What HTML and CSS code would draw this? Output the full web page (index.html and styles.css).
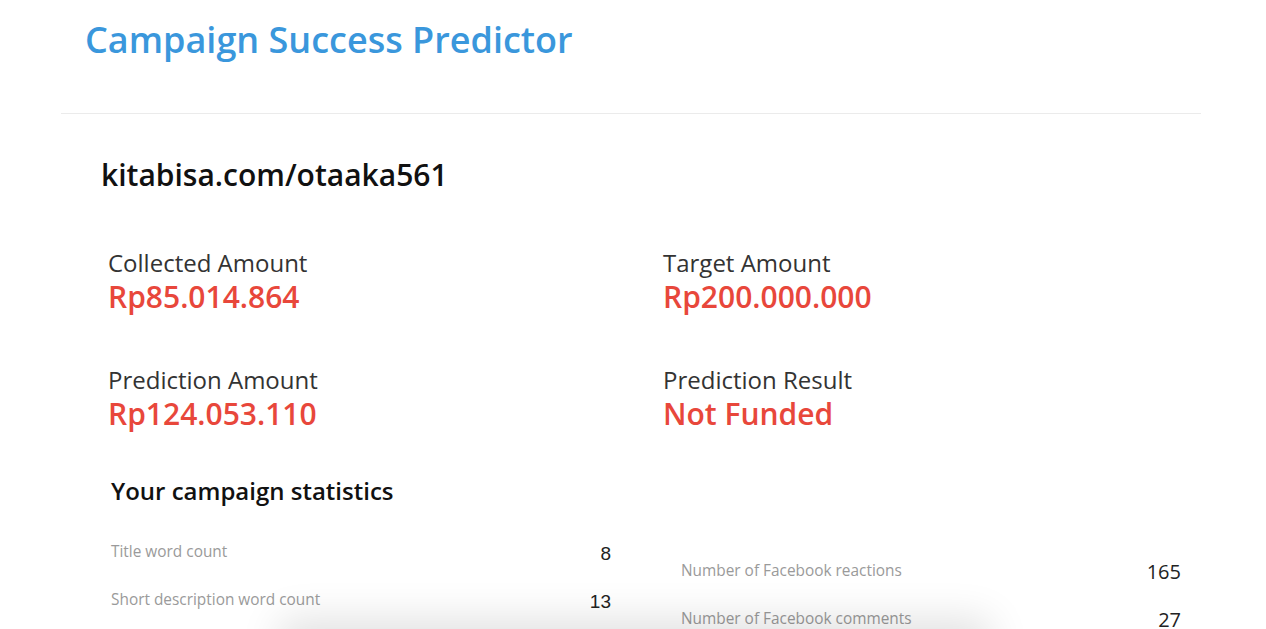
FILE: index.html
```html
<!DOCTYPE html>
<html lang="en">
<head>
<meta charset="utf-8">
<title>Campaign Success Predictor</title>
<link rel="stylesheet" href="styles.css">
</head>
<body>
<header class="header">
  <h1 class="brand">Campaign Success Predictor</h1>
</header>
<hr class="divider">
<main class="main">
  <h2 class="url">kitabisa.com/otaaka561</h2>
  <section class="summary">
    <div class="metric">
      <div class="metric-label">Collected Amount</div>
      <div class="metric-value">Rp85.014.864</div>
    </div>
    <div class="metric">
      <div class="metric-label">Target Amount</div>
      <div class="metric-value">Rp200.000.000</div>
    </div>
    <div class="metric">
      <div class="metric-label">Prediction Amount</div>
      <div class="metric-value">Rp124.053.110</div>
    </div>
    <div class="metric">
      <div class="metric-label">Prediction Result</div>
      <div class="metric-value">Not Funded</div>
    </div>
  </section>
  <h3 class="stats-title">Your campaign statistics</h3>
  <section class="stats">
    <div class="stats-col">
      <div class="stat"><span class="stat-label">Title word count</span><span class="stat-value stat-value-arial">8</span></div>
      <div class="stat"><span class="stat-label">Short description word count</span><span class="stat-value stat-value-arial">13</span></div>
    </div>
    <div class="stats-col stats-col-right">
      <div class="stat"><span class="stat-label">Number of Facebook reactions</span><span class="stat-value">165</span></div>
      <div class="stat"><span class="stat-label">Number of Facebook comments</span><span class="stat-value">27</span></div>
    </div>
  </section>
</main>
<div class="window-shadow"></div>
</body>
</html>
```
FILE: styles.css
```css
html, body {
  margin: 0;
  padding: 0;
  background: #fff;
  overflow: hidden;
}
body {
  font-family: "Open Sans", "Noto Sans", sans-serif;
  color: #333;
}
.header {
  padding: 15px 0 0 85px;
  height: 113px;
  box-sizing: border-box;
}
.brand {
  margin: 0;
  font-size: 36px;
  font-weight: 600;
  line-height: 50px;
  color: #3a97dc;
}
.divider {
  margin: 0 65px 0 61px;
  border: 0;
  border-top: 1px solid #ebebeb;
  height: 0;
}
.main {
  padding: 40px 0 0 101px;
}
.url {
  margin: 0;
  font-size: 30px;
  font-weight: 600;
  line-height: 42px;
  color: #111;
}
.summary {
  display: grid;
  grid-template-columns: 555px 555px;
  row-gap: 48px;
  padding: 50px 0 0 7px;
}
.metric-label {
  font-size: 24px;
  line-height: 33px;
  color: #333;
}
.metric-value {
  font-size: 30px;
  font-weight: 600;
  line-height: 36px;
  color: #e8473b;
}
.stats-title {
  margin: 0;
  padding: 42px 0 0 10px;
  font-size: 24px;
  font-weight: 600;
  line-height: 34px;
  color: #111;
}
.stats {
  display: flex;
  gap: 70px;
  padding: 29px 0 0 10px;
}
.stats-col {
  width: 500px;
  display: flex;
  flex-direction: column;
  gap: 20px;
}
.stats-col-right {
  padding-top: 19px;
}
.stat {
  display: flex;
  justify-content: space-between;
  align-items: center;
  height: 28px;
}
.stat-label {
  font-size: 15.4px;
  color: #9a9a9a;
}
.stat-value {
  font-size: 20px;
  color: #222;
  padding-top: 3px;
}
.stat-value-arial {
  font-family: "Liberation Sans", Arial, sans-serif;
  font-size: 19px;
  padding-top: 6px;
}
.window-shadow {
  position: fixed;
  left: 290px;
  bottom: -40px;
  width: 690px;
  height: 40px;
  box-shadow: 0 0 40px 10px rgba(0, 0, 0, 0.12);
  pointer-events: none;
}
```
